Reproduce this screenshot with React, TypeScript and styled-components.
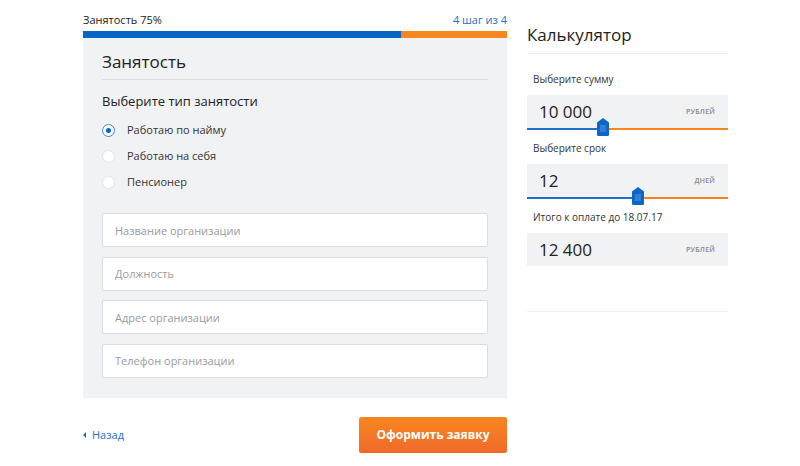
import React from "react";
import styled, { createGlobalStyle } from "styled-components";

const Global = createGlobalStyle`
  html, body { margin: 0; padding: 0; background: #fff; }
  body { font-family: "Open Sans", "Noto Sans", sans-serif; color: #222; }
  * { box-sizing: border-box; }
`;

const Page = styled.div`
  display: flex;
  align-items: flex-start;
  gap: 20px;
  padding: 12px 0 0 83px;
  width: 800px;
  height: 466px;
`;

const LeftCol = styled.div`
  width: 424px;
  display: flex;
  flex-direction: column;
`;

const StepRow = styled.div`
  display: flex;
  justify-content: space-between;
  font-size: 11px;
  line-height: 16px;
  height: 19px;
`;

const StepLabel = styled.span<{ $accent?: boolean }>`
  color: ${(p) => (p.$accent ? "#1f6fc4" : "#222")};
`;

const Progress = styled.div`
  display: flex;
  height: 7px;
  background: #f7861f;
`;

const ProgressFill = styled.div`
  background: #0766c6;
  height: 100%;
`;

const Panel = styled.div`
  background: #f1f2f4;
  padding: 12px 19px 20px 19px;
  display: flex;
  flex-direction: column;
`;

const PanelTitle = styled.h2`
  margin: 0;
  font-weight: 400;
  font-size: 17px;
  line-height: 24px;
  padding-bottom: 5px;
  border-bottom: 1px solid #dcdde0;
`;

const SubTitle = styled.div`
  font-size: 13px;
  line-height: 18px;
  margin-top: 12px;
`;

const RadioList = styled.div`
  display: flex;
  flex-direction: column;
  gap: 8px;
  margin-top: 11px;
`;

const RadioRow = styled.label`
  display: flex;
  align-items: center;
  gap: 12px;
  font-size: 11px;
  line-height: 18px;
  color: #333;
`;

const RadioCircle = styled.span<{ $checked?: boolean }>`
  width: 13px;
  height: 13px;
  border-radius: 50%;
  background: #fff;
  border: 1px solid ${(p) => (p.$checked ? "#3c86d6" : "#e2e3e6")};
  display: flex;
  align-items: center;
  justify-content: center;
  &::after {
    content: "";
    width: 5px;
    height: 5px;
    border-radius: 50%;
    background: ${(p) => (p.$checked ? "#0766c6" : "transparent")};
  }
`;

const Fields = styled.div`
  display: flex;
  flex-direction: column;
  gap: 9.5px;
  margin-top: 22px;
`;

const Field = styled.input`
  height: 34px;
  width: 100%;
  border: 1px solid #dcdde0;
  border-radius: 2px;
  background: #fff;
  padding: 0 12px;
  font-family: inherit;
  font-size: 11px;
  outline: none;
  &::placeholder { color: #9a9a9a; }
`;

const Footer = styled.div`
  display: flex;
  justify-content: space-between;
  align-items: center;
  margin-top: 19px;
`;

const BackLink = styled.a`
  display: flex;
  align-items: center;
  gap: 6px;
  color: #1f6fc4;
  font-size: 11px;
  text-decoration: none;
  &::before {
    content: "";
    border-top: 3px solid transparent;
    border-bottom: 3px solid transparent;
    border-right: 3px solid #1f6fc4;
  }
`;

const SubmitButton = styled.button`
  width: 148px;
  height: 36px;
  border: none;
  border-radius: 2px;
  background: linear-gradient(#f7861f, #f06a2a);
  color: #fff;
  font-family: inherit;
  font-weight: 700;
  font-size: 12px;
`;

const RightCol = styled.div`
  width: 201px;
  display: flex;
  flex-direction: column;
  padding-top: 11px;
`;

const CalcTitle = styled.h2`
  margin: 0;
  font-weight: 400;
  font-size: 17px;
  line-height: 24px;
  padding-bottom: 6px;
  border-bottom: 1px solid #f0f0f2;
`;

const CalcLabel = styled.div<{ $first?: boolean }>`
  font-size: 10px;
  line-height: 14px;
  color: #333;
  padding: ${(p) => (p.$first ? "18px" : "11px")} 0 0 6px;
  margin-bottom: 9px;
`;

const ValueBox = styled.div`
  height: 33px;
  background: #f1f2f4;
  display: flex;
  align-items: center;
  justify-content: space-between;
  padding: 0 13px 0 12px;
`;

const Value = styled.span`
  font-size: 17px;
  line-height: 20px;
`;

const Unit = styled.span`
  font-size: 7px;
  color: #888;
  letter-spacing: 0.2px;
  text-transform: uppercase;
  font-weight: 600;
`;

const Track = styled.div`
  position: relative;
  height: 2px;
  display: flex;
  background: #f7861f;
`;

const TrackFill = styled.div`
  background: #1f6fc4;
  height: 100%;
`;

const Thumb = styled.svg`
  position: absolute;
  top: -10px;
  width: 12px;
  height: 18px;
  margin-left: -6px;
`;

const Spacer = styled.div`
  height: 46px;
  border-bottom: 1px solid #f0f0f2;
`;

const ThumbIcon = ({ left }: { left: number }) => (
  <Thumb viewBox="0 0 12 18" style={{ left: `${left}%` }}>
    <path d="M6 0 L12 4.5 V16.5 Q12 18 10.5 18 H1.5 Q0 18 0 16.5 V4.5 Z" fill="#0a66c8" />
    <rect x="3" y="7" width="6" height="7" fill="#3b86d6" opacity="0.8" />
  </Thumb>
);

const Slider = ({ pct }: { pct: number }) => (
  <Track>
    <TrackFill style={{ width: `${pct}%` }} />
    <ThumbIcon left={pct} />
  </Track>
);

export default function App() {
  return (
    <>
      <Global />
      <Page>
        <LeftCol>
          <StepRow>
            <StepLabel>Занятость 75%</StepLabel>
            <StepLabel $accent>4 шаг из 4</StepLabel>
          </StepRow>
          <Progress>
            <ProgressFill style={{ width: "75%" }} />
          </Progress>
          <Panel>
            <PanelTitle>Занятость</PanelTitle>
            <SubTitle>Выберите тип занятости</SubTitle>
            <RadioList>
              <RadioRow>
                <RadioCircle $checked />
                Работаю по найму
              </RadioRow>
              <RadioRow>
                <RadioCircle />
                Работаю на себя
              </RadioRow>
              <RadioRow>
                <RadioCircle />
                Пенсионер
              </RadioRow>
            </RadioList>
            <Fields>
              <Field placeholder="Название организации" />
              <Field placeholder="Должность" />
              <Field placeholder="Адрес организации" />
              <Field placeholder="Телефон организации" />
            </Fields>
          </Panel>
          <Footer>
            <BackLink href="#">Назад</BackLink>
            <SubmitButton>Оформить заявку</SubmitButton>
          </Footer>
        </LeftCol>
        <RightCol>
          <CalcTitle>Калькулятор</CalcTitle>
          <CalcLabel $first>Выберите сумму</CalcLabel>
          <ValueBox>
            <Value>10 000</Value>
            <Unit>рублей</Unit>
          </ValueBox>
          <Slider pct={38} />
          <CalcLabel>Выберите срок</CalcLabel>
          <ValueBox>
            <Value>12</Value>
            <Unit>дней</Unit>
          </ValueBox>
          <Slider pct={55} />
          <CalcLabel>Итого к оплате до 18.07.17</CalcLabel>
          <ValueBox>
            <Value>12 400</Value>
            <Unit>рублей</Unit>
          </ValueBox>
          <Spacer />
        </RightCol>
      </Page>
    </>
  );
}
